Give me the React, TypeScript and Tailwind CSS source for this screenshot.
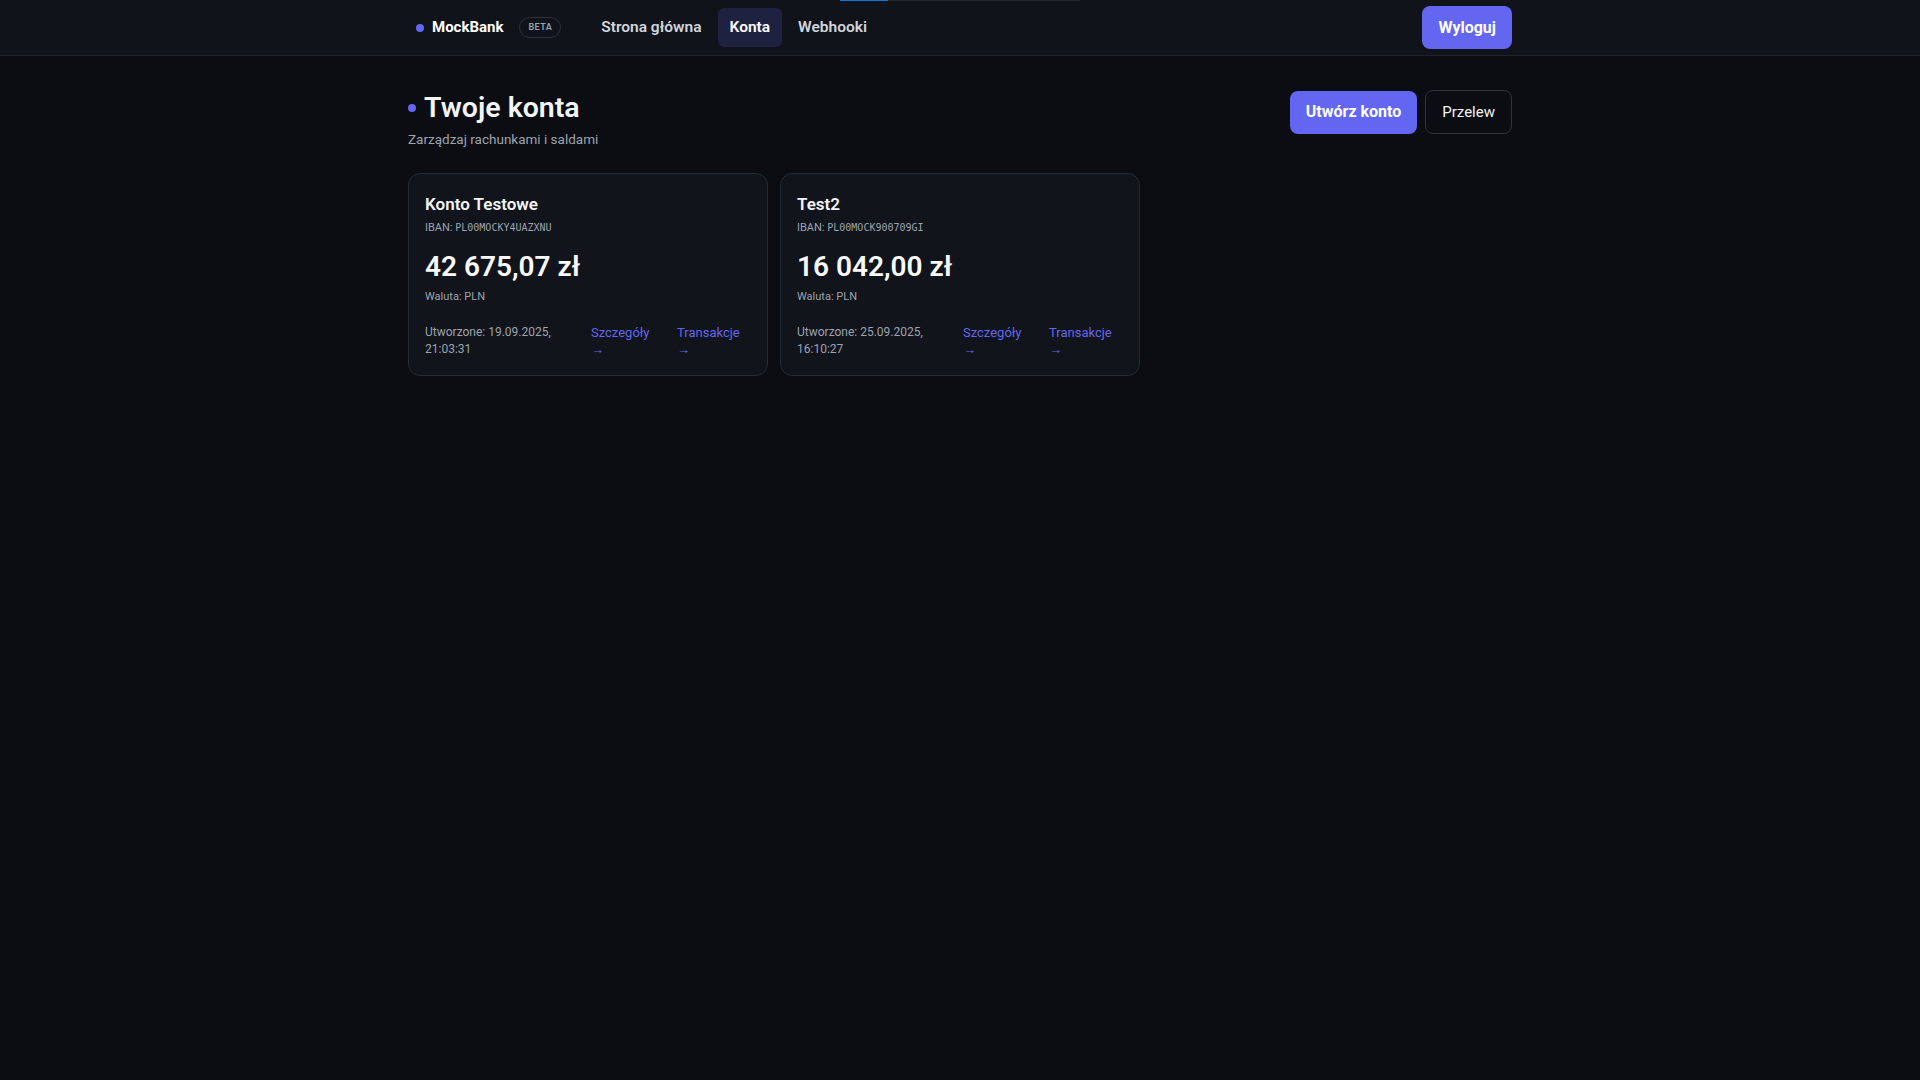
import React from "react";

const accounts = [
  {
    name: "Konto Testowe",
    iban: "PL00MOCKY4UAZXNU",
    balance: "42 675,07 zł",
    currency: "PLN",
    created: "19.09.2025, 21:03:31",
  },
  {
    name: "Test2",
    iban: "PL00MOCK900709GI",
    balance: "16 042,00 zł",
    currency: "PLN",
    created: "25.09.2025, 16:10:27",
  },
];

function Header() {
  return (
    <header className="h-14 border-b border-[#1f232b] bg-[#10131a]">
      <div className="mx-auto flex h-full max-w-6xl items-center justify-between px-6">
        <div className="flex items-center">
          <div className="flex items-center pl-2">
            <span className="h-2 w-2 rounded-full bg-[#6366f1]" />
            <span className="ml-2 text-[15px] font-bold text-white">MockBank</span>
            <span className="ml-4 rounded-full border border-[#2d313a] px-2 py-[3px] text-[9px] font-semibold leading-[13px] tracking-wider text-[#9ca3af]">
              BETA
            </span>
          </div>
          <nav className="ml-[28px] flex items-center gap-1">
            <a className="rounded-md px-3 py-2 text-[15.5px] font-semibold text-[#d1d5db]">Strona główna</a>
            <a className="rounded-md bg-[#1f2140] px-3 py-2 text-[15.5px] font-semibold text-white">Konta</a>
            <a className="rounded-md px-3 py-2 text-[15.5px] font-semibold text-[#d1d5db]">Webhooki</a>
          </nav>
        </div>
        <button className="h-[43px] rounded-lg bg-[#6366f1] px-4 text-[16px] font-bold text-white">
          Wyloguj
        </button>
      </div>
    </header>
  );
}

function AccountCard({ acc }: { acc: (typeof accounts)[number] }) {
  return (
    <div className="rounded-xl border border-[#262a33] bg-[#11141b] px-4 pb-[17px] pt-[18px]">
      <h3 className="text-[17px] font-semibold leading-6 text-[#f3f4f6]">{acc.name}</h3>
      <p className="mt-1 text-[11px] leading-4 text-[#9ca3af]">
        IBAN: <span className="font-['DejaVu_Sans_Mono',monospace] text-[10px]">{acc.iban}</span>
      </p>
      <p className="mt-[13px] text-[28px] font-semibold leading-9 text-[#f9fafb]">{acc.balance}</p>
      <p className="mt-1 text-[11px] leading-4 text-[#9ca3af]">Waluta: {acc.currency}</p>
      <div className="mt-[19px] flex items-start gap-3">
        <p className="min-w-0 flex-1 text-[12px] leading-[17px] text-[#9ca3af]">
          Utworzone: {acc.created}
        </p>
        <a className="w-[74px] text-[13px] leading-[17px] text-[#6366f1]">
          <span className="block w-min">Szczegóły →</span>
        </a>
        <a className="w-[74px] text-[13px] leading-[17px] text-[#6366f1]">
          <span className="block w-min">Transakcje →</span>
        </a>
      </div>
    </div>
  );
}

export default function App() {
  return (
    <div className="relative min-h-screen bg-[#0b0d12] font-['Roboto',sans-serif]">
      <div className="absolute left-[840px] top-0 flex h-px w-[240px] bg-[#24272e]">
        <div className="h-px w-12 bg-[#0a78d4]" />
      </div>
      <Header />
      <main className="mx-auto max-w-6xl px-6 pt-[35px]">
        <div className="flex items-start justify-between">
          <div>
            <div className="flex items-center gap-2">
              <span className="h-2 w-2 rounded-full bg-[#6366f1]" />
              <h1 className="text-[28.5px] font-semibold leading-[34px] text-[#f3f4f6]">Twoje konta</h1>
            </div>
            <p className="mt-1 text-[13.5px] leading-5 text-[#9ca3af]">Zarządzaj rachunkami i saldami</p>
          </div>
          <div className="-mt-px flex items-center gap-2">
            <button className="h-[43px] rounded-lg bg-[#6366f1] px-4 text-[16px] font-bold text-white">
              Utwórz konto
            </button>
            <button className="h-[44px] rounded-lg border border-[#30333b] px-4 text-[15px] text-[#f3f4f6]">
              Przelew
            </button>
          </div>
        </div>
        <div className="mt-6 grid grid-cols-3 gap-3">
          {accounts.map((a) => (
            <AccountCard key={a.iban} acc={a} />
          ))}
        </div>
      </main>
    </div>
  );
}
